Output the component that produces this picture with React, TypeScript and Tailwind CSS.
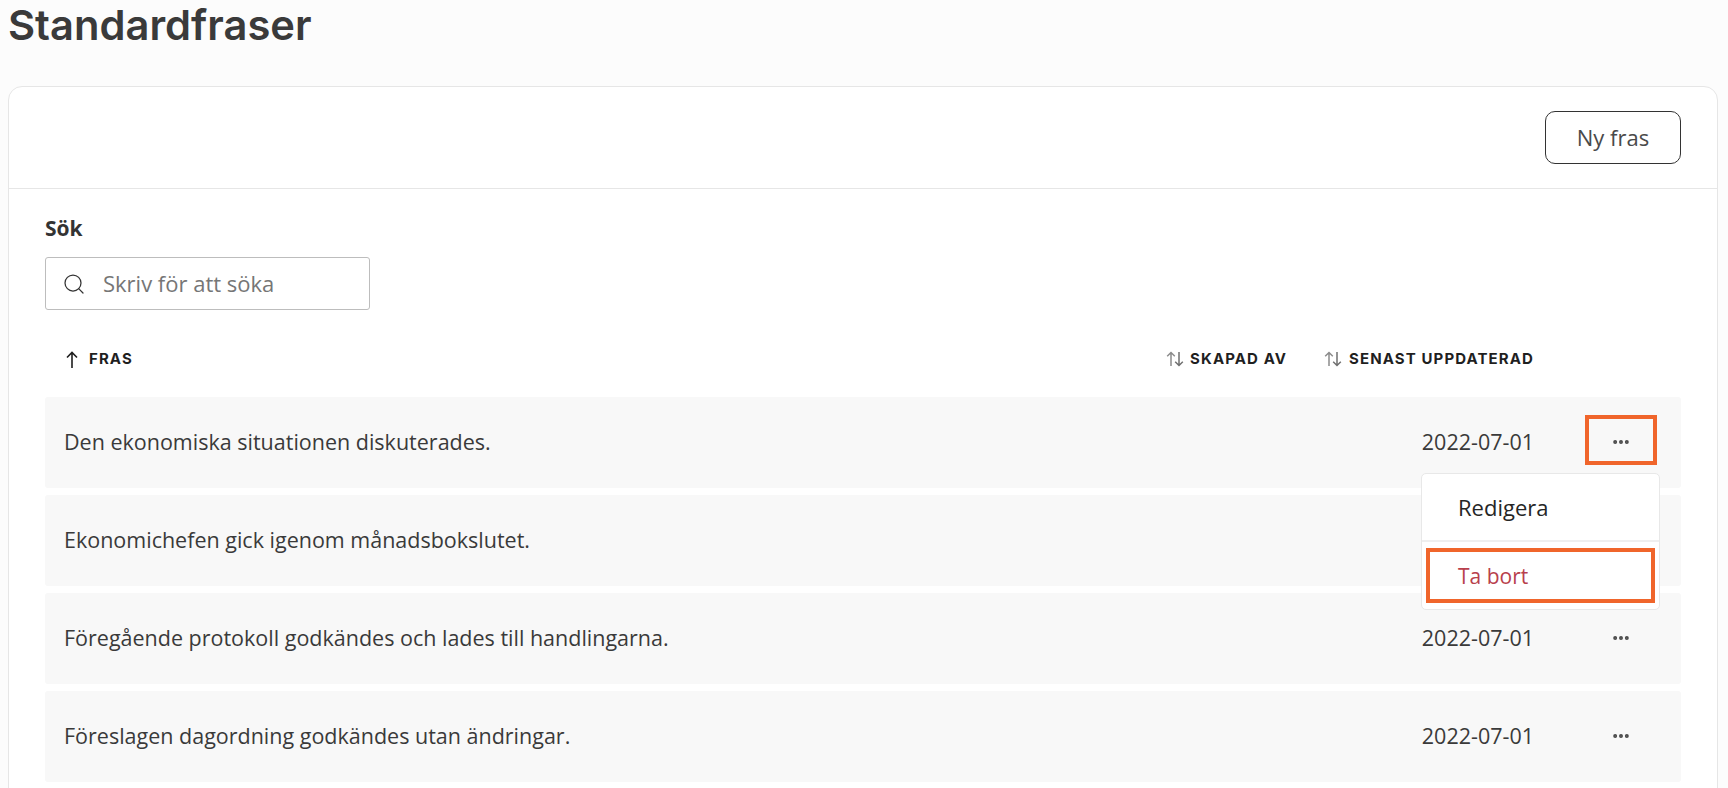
import { MoreHorizontal, Search } from "lucide-react";

const phrases = [
  "Den ekonomiska situationen diskuterades.",
  "Ekonomichefen gick igenom månadsbokslutet.",
  "Föregående protokoll godkändes och lades till handlingarna.",
  "Föreslagen dagordning godkändes utan ändringar.",
];

const SortIcon = () => (
  <svg width="18" height="16" viewBox="0 0 18 16" fill="none" strokeWidth="1.5">
    <path d="M5 15V1.5M1.2 5.2 5 1.5l3.8 3.7" stroke="#8c8c8c" />
    <path d="M13 1v13.5M9.2 10.8 13 14.5l3.8-3.7" stroke="#707070" />
  </svg>
);

const Row = ({ text, first }: { text: string; first: boolean }) => (
  <div className="relative flex h-[91px] items-center rounded-[3px] bg-[#f8f8f8] pb-[5px] pl-[19px] pr-[24px]">
    <span className="flex-1 pt-[5px] font-['Open_Sans',sans-serif] text-[21.5px] text-[#3a3a3a]">{text}</span>
    <span className="pt-[5px] font-['Open_Sans',sans-serif] text-[21.5px] text-[#3a3a3a]">2022-07-01</span>
    <button
      className={`ml-[51px] flex h-[50px] w-[72px] items-center justify-center pt-[4px] text-[#4a4a4a] ${
        first ? "border-4 border-[#f0652b]" : ""
      }`}
    >
      <MoreHorizontal size={20} strokeWidth={2.75} />
    </button>
    {first && (
      <div className="absolute right-[21px] top-[76px] z-10 w-[239px] rounded-[5px] border border-[#e8e8e8] bg-white font-['Open_Sans',sans-serif]">
        <div className="flex h-[68px] items-center border-b-2 border-[#efefef] pl-[36px] text-[22px] text-[#262626]">
          Redigera
        </div>
        <div className="mx-[4px] mt-[6px] mb-[6px] flex h-[55px] items-center border-4 border-[#f0652b] pl-[28px] pt-[2px] text-[21px] text-[#b8404c]">
          Ta bort
        </div>
      </div>
    )}
  </div>
);

export default function App() {
  return (
    <div className="h-[788px] overflow-hidden bg-[#fcfcfc] font-['Inter',sans-serif]">
      <h1 className="h-[86px] pl-[8px] text-[41.7px] font-semibold leading-[50px] text-[#3a3a3a]">
        Standardfraser
      </h1>
      <div className="ml-[8px] mr-[10px] h-[760px] rounded-[14px] border border-[#e6e6e6] bg-white">
        <div className="flex h-[102px] items-start justify-end border-b border-[#e6e6e6] pr-[36px] pt-[24px]">
          <button className="h-[53px] w-[136px] rounded-[10px] border border-[#333] font-['Open_Sans',sans-serif] text-[22px] text-[#4a4a4a]">
            Ny fras
          </button>
        </div>
        <div className="pl-[36px] pr-[36px]">
          <label className="mt-[26px] block font-['Open_Sans',sans-serif] text-[21px] font-bold leading-[26px] text-[#333]">Sök</label>
          <div className="mt-[16px] flex h-[53px] w-[325px] items-center rounded-[3px] border border-[#bdbdbd] pl-[16px]">
            <Search size={24} strokeWidth={1.25} className="text-[#333]" />
            <input
              placeholder="Skriv för att söka"
              className="ml-[17px] w-[240px] bg-transparent font-['Open_Sans',sans-serif] text-[22px] outline-none placeholder:text-[#767676]"
            />
          </div>
          <div className="mt-[29px] flex h-[40px] items-center pl-[21px] pr-[147px] text-[15px] font-bold tracking-[1.1px] text-[#1f1f1f]">
            <svg width="12" height="17" viewBox="0 0 12 17" fill="none" stroke="#1f1f1f" strokeWidth="1.6" className="mr-[11px]">
              <path d="M6 17V1.5M1 6.5l5-5 5 5" />
            </svg>
            <span className="flex-1">FRAS</span>
            <SortIcon />
            <span className="ml-[6px]">SKAPAD AV</span>
            <span className="ml-[37px]">
              <SortIcon />
            </span>
            <span className="ml-[7px]">SENAST UPPDATERAD</span>
          </div>
          <div className="mt-[18px] flex flex-col gap-[7px]">
            {phrases.map((p, i) => (
              <Row key={p} text={p} first={i === 0} />
            ))}
          </div>
        </div>
      </div>
    </div>
  );
}
